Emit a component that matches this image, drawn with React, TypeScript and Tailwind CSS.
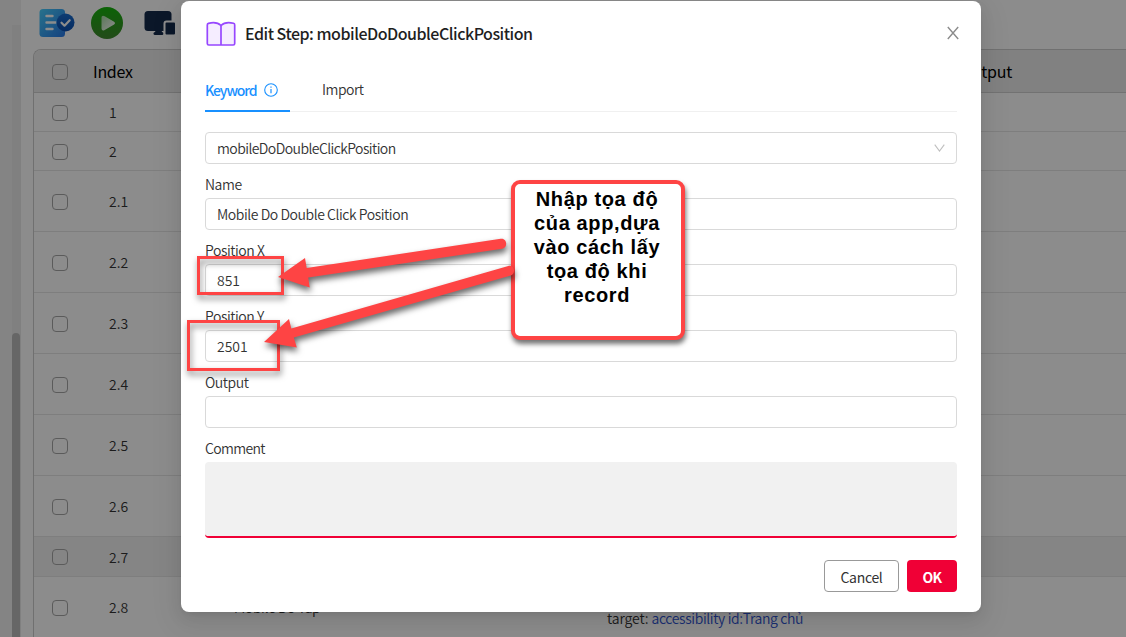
import React from "react";

const rows = [
  { index: "1", h: "h-[39px]" },
  { index: "2", h: "h-[39px]" },
  { index: "2.1", h: "h-[61px]" },
  { index: "2.2", h: "h-[61px]" },
  { index: "2.3", h: "h-[61px]" },
  { index: "2.4", h: "h-[61px]" },
  { index: "2.5", h: "h-[61px]" },
  { index: "2.6", h: "h-[61px]" },
  { index: "2.7", h: "h-[40px] bg-[#f3f3f3]" },
  { index: "2.8", h: "h-[61px]", name: "Mobile Do Tap", target: "accessibility id:Trang chủ" },
];

function Checkbox() {
  return <span className="block size-4 shrink-0 rounded-[4px] border border-[#a6a6a6]" />;
}

function RunIcons() {
  return (
    <svg className="block" width="142" height="36" viewBox="0 0 142 36">
      <defs>
        <linearGradient id="doc" x1="0" y1="0" x2="1" y2="1">
          <stop offset="0" stopColor="#48d0ff" />
          <stop offset="1" stopColor="#2878e8" />
        </linearGradient>
        <linearGradient id="play" x1="0" y1="0" x2="0" y2="1">
          <stop offset="0" stopColor="#16b40c" />
          <stop offset="1" stopColor="#40882e" />
        </linearGradient>
        <linearGradient id="tri" x1="0" y1="0" x2="1" y2="1">
          <stop offset="0" stopColor="#a6dba2" />
          <stop offset="1" stopColor="#ffffff" />
        </linearGradient>
        <linearGradient id="badge" x1="0" y1="0" x2="0" y2="1">
          <stop offset="0" stopColor="#1a6dd0" />
          <stop offset="1" stopColor="#0c4fb0" />
        </linearGradient>
      </defs>
      <rect x="0.5" y="4" width="25.5" height="28" rx="3.5" fill="url(#doc)" />
      <path d="M7.500 11h6M7.500 17.500h9M7.500 24h6" stroke="#fff" strokeWidth="2.400" strokeLinecap="round" />
      <circle cx="26.500" cy="17.500" r="9" fill="url(#badge)" />
      <path d="m22.500 17.700 3 3 5.200-5.500" fill="none" stroke="#fff" strokeWidth="2.200" strokeLinecap="round" strokeLinejoin="round" />
      <circle cx="68" cy="18" r="16" fill="url(#play)" />
      <path d="M62.500 13.200c0-2.400 1.300-3 3.200-1.900l9 5.100c1.700 1 1.700 2.400 0 3.400l-9 5.100c-1.900 1.100-3.200.5-3.200-1.900Z" fill="url(#tri)" />
      <rect x="105.500" y="6" width="27" height="20" rx="3.500" fill="#152b4c" />
      <path d="M116.500 25h6l.8 3.500h-7.500Z" fill="#152b4c" />
      <path d="M116 28.500h7" stroke="#152b4c" strokeWidth="3" strokeLinecap="round" />
      <rect x="125.500" y="16.500" width="11.500" height="14" rx="2" fill="#152b4c" stroke="#fff" strokeWidth="2" />
    </svg>
  );
}

function Field({ label, value, tracking = "" }: { label: string; value?: string; tracking?: string }) {
  return (
    <div className="h-[66px]">
      <div className="flex h-7 items-center pt-px leading-5 tracking-[-0.45px]">{label}</div>
      <div className={"mt-px flex h-8 items-center rounded-[4px] border border-[#d9d9d9] pl-[11px] " + tracking}>{value}</div>
    </div>
  );
}

function Annotations() {
  return (
    <>
      <div className="absolute left-[197px] top-[256px] h-[39px] w-[87px] border-3 border-[#fe4444] drop-shadow-[1px_4px_3px_rgba(0,0,0,0.5)]" />
      <div className="absolute left-[187px] top-[320px] h-[51px] w-[93px] border-3 border-[#fe4444] drop-shadow-[1px_4px_3px_rgba(0,0,0,0.5)]" />
      <div className="absolute left-[511px] top-[180px] h-[160px] w-[174px] rounded-[9px] border-4 border-[#fe4444] bg-white pt-[3px] pr-0.5 text-center font-['Liberation_Sans',sans-serif] text-[20px] leading-6 font-bold tracking-[0.63px] text-black shadow-[1px_4px_5px_rgba(0,0,0,0.55)]">
        <div>Nhập tọa độ</div>
        <div>của app,dựa</div>
        <div>vào cách lấy</div>
        <div>tọa độ khi</div>
        <div>record</div>
      </div>
      <svg className="absolute left-0 top-0 drop-shadow-[1px_4px_3px_rgba(0,0,0,0.6)]" width="1126" height="637" viewBox="0 0 1126 637" fill="#fe4444">
        <path d="m278 277 27-19 1.700 10 194-29.200c6.500-1 7.500 9 1.500 10l-194 28.700 1.500 10Z" />
        <path d="m264 342 25-23 2.300 9.500 217-62.500c6-1.500 8 7.500 2.500 9.500l-217 62 3 10Z" />
      </svg>
    </>
  );
}

export default function App() {
  return (
    <div className="relative h-[637px] w-[1126px] overflow-hidden bg-white font-['Noto_Sans_CJK_SC',sans-serif] text-[14px] font-[350] text-[#333333]">
      <div className="flex h-full">
        <aside className="w-3 shrink-0 bg-[#f0f0f0]" />
        <div className="flex w-[9px] shrink-0 flex-col bg-[#f0f0f0] pt-[25px]">
          <div className="flex h-[612px] flex-col bg-[#eaeaea] pt-[308px]">
            <div className="h-[304px] w-2 rounded-t-[4px] bg-[#bababa]" />
          </div>
        </div>
        <main className="min-w-0 flex-1 pl-3">
          <div className="flex h-[49px] pl-1.5 pt-[5px]"><RunIcons /></div>
          <div className="h-[600px] rounded-tl-[8px] border-l border-t border-[#cccccc]">
            <div className="flex h-[43px] items-center rounded-tl-[7px] border-b border-[#cfcfcf] bg-[#ebebeb] pl-[18px] pt-px text-[16px] font-normal text-[#000]">
              <Checkbox />
              <span className="w-[892px] pb-0.5 pl-[25px] tracking-[-0.3px]">Index</span>
              <span className="pb-0.5 tracking-[-0.2px]">Output</span>
            </div>
            {rows.map((row) => (
              <div key={row.index} className={"flex items-center border-b border-[#e6e6e6] pl-[18px] pt-px " + row.h}>
                <Checkbox />
                <span className="w-[166px] pl-[41px]">{row.index}</span>
                {row.name && <span className="w-[373px] tracking-[-0.4px]">{row.name}</span>}
                {row.target && <span className="pt-[22px] tracking-[-0.36px]"><span className="tracking-[-0.1px]">target: </span><span className="text-[#2f54d0]">{row.target}</span></span>}
              </div>
            ))}
          </div>
        </main>
      </div>

      <div className="absolute inset-0 flex items-start justify-center bg-black/45 pl-[36px] pt-px">
        <section className="h-[611px] w-[800px] rounded-[8px] bg-white px-6 shadow-[0_9px_28px_8px_rgba(0,0,0,0.05),0_6px_16px_0_rgba(0,0,0,0.08),0_3px_6px_-4px_rgba(0,0,0,0.12)]">
          <header className="flex h-[65px] items-center">
            <svg className="block" width="32" height="28" viewBox="0 0 32 28" fill="#f5edff" stroke="#9747ff" strokeWidth="1.700" strokeLinejoin="round">
              <path d="M16 5.500C13 2.500 7 2.500 3.500 3.300Q2.300 3.600 2.300 5v18.500q0 1.500 1.500 1.500h24.400q1.500 0 1.500-1.500V5q0-1.400-1.200-1.700C25 2.500 19 2.500 16 5.500Z" />
              <path d="M16 5.500v19.500" />
            </svg>
            <h1 className="flex-1 pb-px pl-2 text-[16px] font-medium tracking-[-0.49px] text-[#1f1f1f]">Edit Step: mobileDoDoubleClickPosition</h1>
            <svg className="mr-[-2px] mb-0.5 block" width="12" height="14" viewBox="0 0 12 14" fill="none" stroke="#8c8c8c" strokeWidth="1.400"><path d="m.8 1 10.400 12M11.200 1 .8 13" /></svg>
          </header>
          <nav className="flex h-[46px] border-b border-[#f0f0f0]">
            <div className="flex h-[46px] w-[85px] items-center border-b-2 border-[#1890ff] pt-1 font-normal text-[#1890ff]">
              <span className="w-[52px] font-medium tracking-[-1.1px]">Keyword</span>
              <svg className="ml-[7px] block" width="14" height="14" viewBox="0 0 14 14" fill="none" stroke="#1890ff"><circle cx="7" cy="7" r="6.300" strokeWidth="1.100" /><path d="M7 6v4.300M7 3.500v1.200" strokeWidth="1.200" /></svg>
            </div>
            <div className="flex items-center pl-8 pt-0.5 tracking-[-0.5px]">Import</div>
          </nav>
          <div className="mt-5 flex h-8 items-center justify-between rounded-[4px] border border-[#d9d9d9] pl-[11px] pr-[11px]">
            <span className="tracking-[-0.57px]">mobileDoDoubleClickPosition</span>
            <svg width="11" height="8" viewBox="0 0 11 8" fill="none" stroke="#bfbfbf" strokeWidth="1.100"><path d="m.7.700 4.800 6.300L10.300.700" /></svg>
          </div>
          <div className="pt-[5px]">
            <Field label="Name" value="Mobile Do Double Click Position" tracking="tracking-[-0.44px]" />
            <Field label="Position X" value="851" />
            <Field label="Position Y" value="2501" />
            <Field label="Output" />
            <div className="flex h-7 items-center pt-px leading-5 tracking-[-0.65px]">Comment</div>
            <div className="mt-px h-[76px] rounded-[4px] border-b-2 border-[#f00036] bg-[#f1f1f1]" />
          </div>
          <footer className="mt-[22px] flex justify-end gap-2">
            <button className="h-8 w-[75px] rounded-[4px] border border-[#999] pt-0.5 font-normal tracking-[-0.3px]">Cancel</button>
            <button className="h-8 w-[50px] rounded-[4px] bg-[#f00036] pt-0.5 font-bold tracking-[-0.7px] text-white">OK</button>
          </footer>
        </section>
      </div>
      <Annotations />
    </div>
  );
}
